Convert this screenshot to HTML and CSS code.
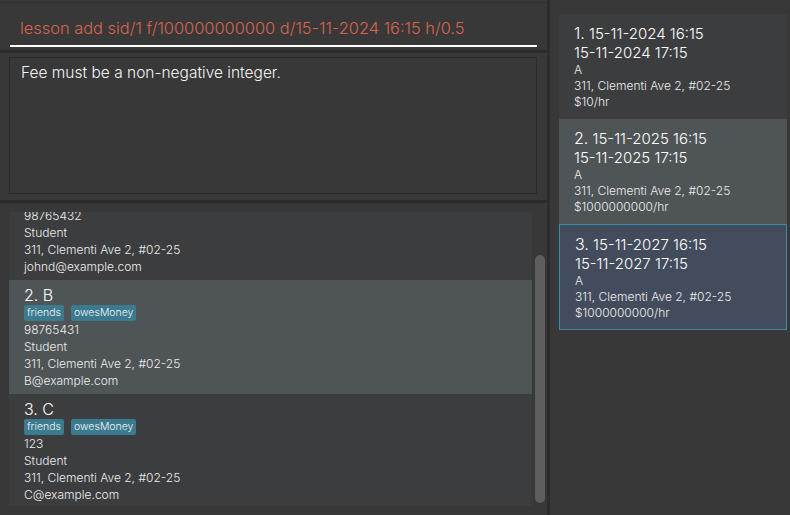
FILE: index.html
```html
<!DOCTYPE html>
<html>
<head>
<meta charset="utf-8">
<link rel="stylesheet" href="styles.css">
</head>
<body>
<div class="app">
  <div class="left">
    <div class="command">
      <div class="field">lesson add sid/1 f/100000000000 d/15-11-2024 16:15 h/0.5</div>
    </div>
    <div class="hdiv"></div>
    <div class="result-wrap">
      <div class="result">Fee must be a non-negative integer.</div>
    </div>
    <div class="hdiv"></div>
    <div class="list-wrap">
      <div class="list">
        <div class="list-inner">
          <div class="pcard odd">
            <div class="pname">1. John Doe</div>
            <div class="tags"><span class="tag">friends</span></div>
            <div class="pline">98765432</div>
            <div class="pline">Student</div>
            <div class="pline">311, Clementi Ave 2, #02-25</div>
            <div class="pline">johnd@example.com</div>
          </div>
          <div class="pcard even">
            <div class="pname">2. B</div>
            <div class="tags"><span class="tag">friends</span><span class="tag">owesMoney</span></div>
            <div class="pline">98765431</div>
            <div class="pline">Student</div>
            <div class="pline">311, Clementi Ave 2, #02-25</div>
            <div class="pline">B@example.com</div>
          </div>
          <div class="pcard odd">
            <div class="pname">3. C</div>
            <div class="tags"><span class="tag">friends</span><span class="tag">owesMoney</span></div>
            <div class="pline">123</div>
            <div class="pline">Student</div>
            <div class="pline">311, Clementi Ave 2, #02-25</div>
            <div class="pline">C@example.com</div>
          </div>
        </div>
      </div>
      <div class="scrolltrack"><div class="thumb"></div></div>
    </div>
  </div>
  <div class="vdiv"></div>
  <div class="right">
    <div class="lcard odd">
      <div class="ltitle"><span class="lid">1.</span> 15-11-2024 16:15</div>
      <div class="ltitle">15-11-2024 17:15</div>
      <div class="lline">A</div>
      <div class="lline">311, Clementi Ave 2, #02-25</div>
      <div class="lline">$10/hr</div>
    </div>
    <div class="lcard even">
      <div class="ltitle"><span class="lid">2.</span> 15-11-2025 16:15</div>
      <div class="ltitle">15-11-2025 17:15</div>
      <div class="lline">A</div>
      <div class="lline">311, Clementi Ave 2, #02-25</div>
      <div class="lline">$1000000000/hr</div>
    </div>
    <div class="lcard selected">
      <div class="ltitle"><span class="lid">3.</span> 15-11-2027 16:15</div>
      <div class="ltitle">15-11-2027 17:15</div>
      <div class="lline">A</div>
      <div class="lline">311, Clementi Ave 2, #02-25</div>
      <div class="lline">$1000000000/hr</div>
    </div>
  </div>
</div>
</body>
</html>
```
FILE: styles.css
```css
html, body {
  margin: 0;
  padding: 0;
}
body {
  background: #383838;
  font-family: Inter, "Noto Sans", sans-serif;
  color: #eeeeee;
}
.app {
  width: 790px;
  height: 515px;
  display: flex;
  overflow: hidden;
}
.left {
  width: 547px;
  display: flex;
  flex-direction: column;
  flex: none;
}
.command {
  box-sizing: border-box;
  padding: 9px 10px 0 10px;
  border-top: 1px solid #313131;
  margin-top: 2px;
  height: 48px;
}
.field {
  height: 32px;
  padding-top: 1px;
  box-sizing: content-box;
  border-bottom: 2px solid #ffffff;
  padding-left: 10px;
  line-height: 31px;
  font-size: 16.4px;
  font-weight: 350;
  color: #d8644f;
  white-space: nowrap;
  overflow: hidden;
}
.hdiv {
  height: 3px;
  background: #2c2c2c;
  flex: none;
}
.result-wrap {
  height: 147px;
  box-sizing: border-box;
  padding: 4px 10px 6px 9px;
  flex: none;
}
.result {
  height: 100%;
  box-sizing: border-box;
  border: 1px solid #2b2b2b;
  padding: 5px 11px;
  font-size: 15.5px;
  font-weight: 350;
  line-height: 20px;
  color: #f4f4f4;
}
.list-wrap {
  flex: 1;
  display: flex;
  padding: 9px 2px 0 9px;
  box-sizing: border-box;
}
.list {
  width: 523px;
  height: 294px;
  overflow: hidden;
  flex: none;
}
.list-inner {
  margin-top: -46px;
}
.pcard {
  height: 114px;
  box-sizing: border-box;
  padding: 5px 15px 4px 15px;
}
.odd {
  background: #3c3d3f;
}
.even {
  background: #4f5457;
}
.pname {
  font-size: 16px;
  font-weight: 350;
  line-height: 20px;
  color: #ffffff;
}
.tags {
  display: flex;
  gap: 7px;
  height: 16px;
}
.tag {
  background: #3b7a8f;
  color: #f4f4f4;
  font-size: 10.5px;
  font-weight: 350;
  line-height: 16px;
  height: 16px;
  padding: 0 3px;
  border-radius: 2px;
}
.pline {
  font-size: 12px;
  font-weight: 350;
  line-height: 17px;
  white-space: nowrap;
}
.scrolltrack {
  width: 10px;
  margin-left: 3px;
  height: 294px;
  padding-top: 43px;
  box-sizing: border-box;
  flex: none;
}
.thumb {
  height: 248px;
  background: #5e5e5e;
  border-radius: 5px;
}
.vdiv {
  width: 3px;
  background: #2c2c2c;
  flex: none;
}
.right {
  flex: 1;
  padding: 14px 3px 0 9px;
  box-sizing: border-box;
}
.lcard {
  height: 105px;
  box-sizing: border-box;
  padding: 10px 15px 9px 15px;
}
.lcard.selected {
  background: #434c5c;
  border: 1px solid #3a8ca8;
  height: 106px;
  padding: 10px 14px 9px 15px;
}
.ltitle {
  font-size: 15px;
  font-weight: 350;
  line-height: 19px;
  color: #ffffff;
  white-space: nowrap;
}
.lid {
  font-size: 16px;
}
.lline {
  font-size: 12px;
  font-weight: 350;
  line-height: 16px;
  white-space: nowrap;
}
```
